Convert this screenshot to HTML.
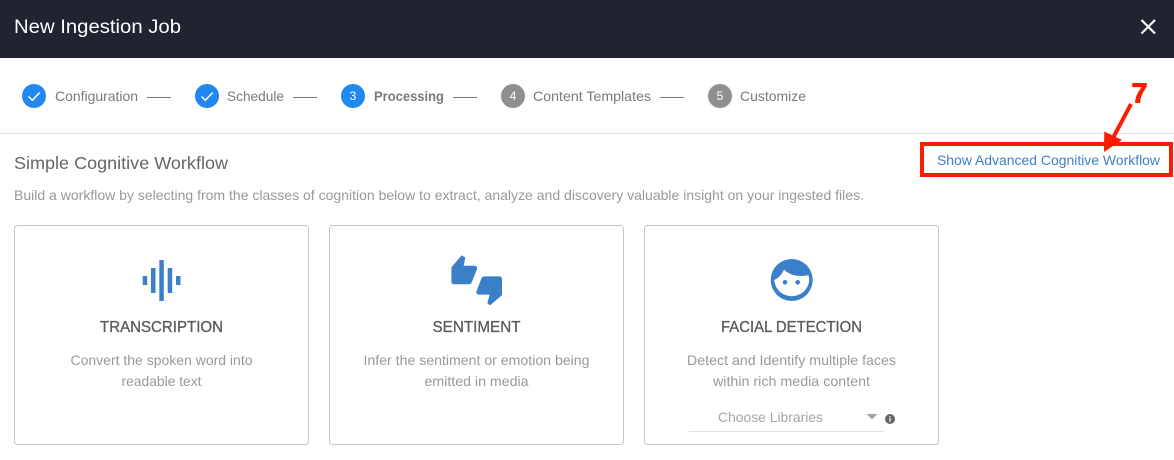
<!DOCTYPE html>
<html><head><meta charset="utf-8"><style>
html,body{margin:0;padding:0;background:#fff;width:1174px;height:460px;overflow:hidden}
svg{display:block}
text{font-family:"Liberation Sans",sans-serif}
</style></head><body>
<svg width="1174" height="460" viewBox="0 0 1174 460" xmlns="http://www.w3.org/2000/svg">
<rect width="1174" height="460" fill="#fff"/>
<rect width="1174" height="58" fill="#1f2430"/>
<text x="14" y="33" font-size="19.500" fill="#fff" textLength="167" lengthAdjust="spacingAndGlyphs">New Ingestion Job</text>
<path d="M1141.500 20L1155 33.500M1155 20L1141.500 33.500" stroke="#fff" stroke-width="2.200" fill="none"/>

<circle cx="34" cy="96" r="12" fill="#2088ef"/>
<path d="M28.500 96.500l3.800 3.800 7.500-7.800" stroke="#fff" stroke-width="1.500" fill="none"/>
<text x="55" y="101" font-size="14" fill="#7a7a7a" textLength="83" lengthAdjust="spacingAndGlyphs">Configuration</text>
<rect x="147" y="97" width="24" height="1" fill="#777"/>
<circle cx="207" cy="96" r="12" fill="#2088ef"/>
<path d="M201.500 96.500l3.800 3.800 7.500-7.800" stroke="#fff" stroke-width="1.500" fill="none"/>
<text x="227" y="101" font-size="14" fill="#7a7a7a" textLength="57" lengthAdjust="spacingAndGlyphs">Schedule</text>
<rect x="293" y="97" width="24" height="1" fill="#777"/>
<circle cx="353" cy="96" r="12" fill="#2088ef"/>
<text x="353" y="100" font-size="12" fill="#fff" text-anchor="middle">3</text>
<text x="374" y="101" font-size="14" font-weight="bold" fill="#7a7a7a" textLength="70" lengthAdjust="spacingAndGlyphs">Processing</text>
<rect x="453" y="97" width="24" height="1" fill="#777"/>
<circle cx="513" cy="96" r="12" fill="#8f8f8f"/>
<text x="513" y="100" font-size="12" fill="#fff" text-anchor="middle">4</text>
<text x="533" y="101" font-size="14" fill="#7a7a7a" textLength="118" lengthAdjust="spacingAndGlyphs">Content Templates</text>
<rect x="660" y="97" width="24" height="1" fill="#777"/>
<circle cx="720" cy="96" r="12" fill="#8f8f8f"/>
<text x="720" y="100" font-size="12" fill="#fff" text-anchor="middle">5</text>
<text x="740" y="101" font-size="14" fill="#7a7a7a" textLength="66" lengthAdjust="spacingAndGlyphs">Customize</text>

<rect x="0" y="133" width="1174" height="1" fill="#e0e0e0"/>

<text x="14" y="169" font-size="17.500" fill="#666" textLength="214" lengthAdjust="spacingAndGlyphs">Simple Cognitive Workflow</text>
<text x="14" y="200" font-size="14" fill="#999" textLength="850" lengthAdjust="spacingAndGlyphs">Build a workflow by selecting from the classes of cognition below to extract, analyze and discovery valuable insight on your ingested files.</text>

<text x="937" y="165" font-size="14" fill="#3f80c8" textLength="223" lengthAdjust="spacingAndGlyphs">Show Advanced Cognitive Workflow</text>
<rect x="922" y="144" width="249" height="31" fill="none" stroke="#fb1d00" stroke-width="4"/>
<text x="1131.500" y="102.500" font-size="28" font-weight="bold" fill="#fb1d00" stroke="#fb1d00" stroke-width="1" textLength="16" lengthAdjust="spacingAndGlyphs">7</text>
<path d="M1131 104L1113 138" stroke="#fb1d00" stroke-width="4" fill="none"/>
<path d="M1104.300 131.500L1122 140L1104 152Z" fill="#fb1d00"/>

<rect x="14.500" y="225.500" width="294" height="219" rx="3" fill="#fff" stroke="#c6c6c6"/>
<rect x="329.500" y="225.500" width="294" height="219" rx="3" fill="#fff" stroke="#c6c6c6"/>
<rect x="644.500" y="225.500" width="294" height="219" rx="3" fill="#fff" stroke="#c6c6c6"/>

<g fill="#3a80c9">
<rect x="142.700" y="276" width="4.500" height="9"/>
<rect x="151" y="268" width="4.500" height="25"/>
<rect x="159.300" y="260" width="4.500" height="41"/>
<rect x="167.700" y="268" width="4.500" height="25"/>
<rect x="176" y="276" width="4.500" height="9"/>
<path stroke="#3a80c9" stroke-width="0.600" d="M451.700 267.500L461.700 255.700L465 257.700L463.300 266L474.500 266Q477.200 266 476.700 269L471.500 282Q470.800 284 468.500 284L454 284Q451.700 284 451.700 281.500Z"/>
<path stroke="#3a80c9" stroke-width="0.600" d="M481.700 278.500Q482.400 276.700 484.500 276.700L499 276.700Q501.700 276.700 501.700 279L501.700 295L490 305L487.700 303L490 294.300L479 294.300Q476 294.300 476.700 291.500Z"/>
<circle cx="791.700" cy="280" r="21"/>
</g>
<path d="M774.200 280C779 278 782 274 784 269.500C788 274 795 276 801 276C804 276 806.500 275.500 808.300 275C809 277 809.300 279 809.300 280A17.600 17.600 0 0 1 774.200 280Z" fill="#fff"/>
<circle cx="785" cy="282.300" r="2.300" fill="#3a80c9"/>
<circle cx="797.700" cy="282.300" r="2.300" fill="#3a80c9"/>

<text x="161.500" y="332" font-size="15.500" fill="#5a5a5a" stroke="#5a5a5a" stroke-width="0.300" text-anchor="middle" textLength="123" lengthAdjust="spacingAndGlyphs">TRANSCRIPTION</text>
<text x="161.500" y="365" font-size="14" fill="#999" text-anchor="middle" textLength="182" lengthAdjust="spacingAndGlyphs">Convert the spoken word into</text>
<text x="161.500" y="386" font-size="14" fill="#999" text-anchor="middle" textLength="80" lengthAdjust="spacingAndGlyphs">readable text</text>

<text x="476.500" y="332" font-size="15.500" fill="#5a5a5a" stroke="#5a5a5a" stroke-width="0.300" text-anchor="middle" textLength="88" lengthAdjust="spacingAndGlyphs">SENTIMENT</text>
<text x="476.500" y="365" font-size="14" fill="#999" text-anchor="middle" textLength="226" lengthAdjust="spacingAndGlyphs">Infer the sentiment or emotion being</text>
<text x="476.500" y="386" font-size="14" fill="#999" text-anchor="middle" textLength="104" lengthAdjust="spacingAndGlyphs">emitted in media</text>

<text x="791.500" y="332" font-size="15.500" fill="#5a5a5a" stroke="#5a5a5a" stroke-width="0.300" text-anchor="middle" textLength="141" lengthAdjust="spacingAndGlyphs">FACIAL DETECTION</text>
<text x="791.500" y="365" font-size="14" fill="#999" text-anchor="middle" textLength="209" lengthAdjust="spacingAndGlyphs">Detect and Identify multiple faces</text>
<text x="791.500" y="386" font-size="14" fill="#999" text-anchor="middle" textLength="157" lengthAdjust="spacingAndGlyphs">within rich media content</text>

<text x="718" y="422" font-size="14" fill="#a5a5a5" textLength="105" lengthAdjust="spacingAndGlyphs">Choose Libraries</text>
<path d="M866.500 414H877.500L872 419.500Z" fill="#a5a5a5"/>
<rect x="689" y="431" width="195" height="1" fill="#e0e0e0"/>
<circle cx="890" cy="419" r="5" fill="#666"/>
<rect x="889.400" y="418" width="1.300" height="3.500" fill="#fff"/>
<rect x="889.400" y="416" width="1.300" height="1.200" fill="#fff"/>
</svg>
</body></html>
